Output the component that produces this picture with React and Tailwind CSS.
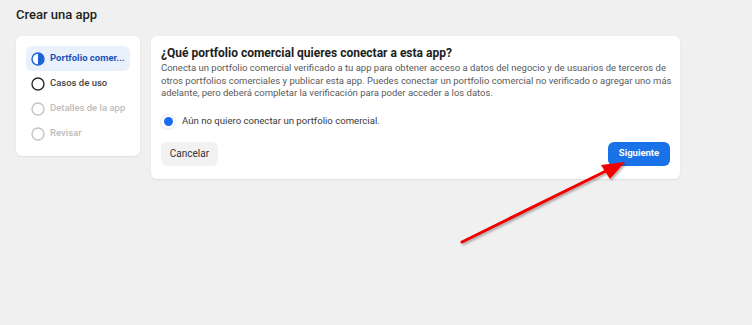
import React from 'react';

const steps = [
  { label: 'Portfolio comer...', state: 'active' },
  { label: 'Casos de uso', state: 'next' },
  { label: 'Detalles de la app', state: 'todo' },
  { label: 'Revisar', state: 'todo' },
];

function StepIcon({ state }) {
  if (state === 'active') {
    return (
      <svg width="14" height="14" viewBox="0 0 14 14" className="shrink-0">
        <circle cx="7" cy="7" r="6" fill="white" stroke="#1c63d8" strokeWidth="1.4" />
        <path d="M7 1 A6 6 0 0 1 7 13 Z" fill="#1c63d8" />
      </svg>
    );
  }
  return (
    <svg width="14" height="14" viewBox="0 0 14 14" className="shrink-0">
      <circle
        cx="7"
        cy="7"
        r="6"
        fill="white"
        stroke={state === 'next' ? '#2b2b2b' : '#c4c4c4'}
        strokeWidth="1.4"
      />
    </svg>
  );
}

export default function App() {
  return (
    <div
      className="relative w-[752px] h-[325px] bg-[#f0f0f0] overflow-hidden"
      style={{ fontFamily: 'Roboto, "Liberation Sans", sans-serif' }}
    >
      <h1 className="pl-4 pt-[6px] h-[36px] text-[13px] font-medium text-[#1c1e21] leading-[18px]">
        Crear una app
      </h1>

      <div className="flex items-start gap-[11px] pl-4">
        <aside className="w-[124px] bg-white rounded-md shadow-[0_1px_2px_rgba(0,0,0,0.08)] px-[10px] pt-[10px] pb-[10px]">
          <nav className="flex flex-col">
            {steps.map((s) => (
              <div
                key={s.label}
                className={`flex items-center gap-[5px] h-[25px] px-[5px] rounded-md ${
                  s.state === 'active' ? 'bg-[#e9f1fd]' : ''
                }`}
              >
                <StepIcon state={s.state} />
                <span
                  className={`text-[9.5px] whitespace-nowrap ${
                    s.state === 'active'
                      ? 'text-[#1c54b8] font-bold'
                      : s.state === 'next'
                      ? 'text-[#444] font-medium'
                      : 'text-[#bcbcbc] font-medium'
                  }`}
                >
                  {s.label}
                </span>
              </div>
            ))}
          </nav>
        </aside>

        <main className="w-[529px] bg-white rounded-md shadow-[0_1px_2px_rgba(0,0,0,0.08)] px-[10px] pt-[9px] pb-[13px]">
          <h2 className="text-[12px] font-bold text-[#1c1e21] leading-[16px] whitespace-nowrap">
            ¿Qué portfolio comercial quieres conectar a esta app?
          </h2>
          <p className="text-[9.5px] text-[#5a5a5a] leading-[12.5px] mt-[1px] whitespace-nowrap">
            Conecta un portfolio comercial verificado a tu app para obtener acceso a datos del negocio y de usuarios de terceros de
            <br />
            otros portfolios comerciales y publicar esta app. Puedes conectar un portfolio comercial no verificado o agregar uno más
            <br />
            adelante, pero deberá completar la verificación para poder acceder a los datos.
          </p>

          <label className="flex items-center gap-[7px] mt-[15px] h-[14px]">
            <span className="w-[14px] h-[14px] rounded-full bg-white shadow-[0_0_2px_rgba(0,0,0,0.25)] flex items-center justify-center">
              <span className="w-[9px] h-[9px] rounded-full bg-[#1b6cf2]" />
            </span>
            <span className="text-[9.6px] text-[#3a3a3a]">Aún no quiero conectar un portfolio comercial.</span>
          </label>

          <div className="flex items-center justify-between mt-[13px]">
            <button className="h-[24px] w-[57px] rounded-md bg-[#f2f2f2] text-[10px] text-[#333]">
              Cancelar
            </button>
            <button className="h-[24px] w-[62px] rounded-md bg-[#1a72e8] text-[9.5px] font-bold text-white">
              Siguiente
            </button>
          </div>
        </main>
      </div>

      <svg className="absolute left-0 top-0 pointer-events-none" width="752" height="325">
        <defs>
          <filter id="sh" x="-20%" y="-20%" width="140%" height="140%">
            <feDropShadow dx="1.5" dy="1.5" stdDeviation="1" floodColor="#000" floodOpacity="0.35" />
          </filter>
        </defs>
        <g filter="url(#sh)">
          <line x1="462" y1="242" x2="608" y2="170" stroke="#f20000" strokeWidth="3" strokeLinecap="round" />
          <polygon points="625,162 601,165 610,179" fill="#f20000" />
        </g>
      </svg>
    </div>
  );
}
